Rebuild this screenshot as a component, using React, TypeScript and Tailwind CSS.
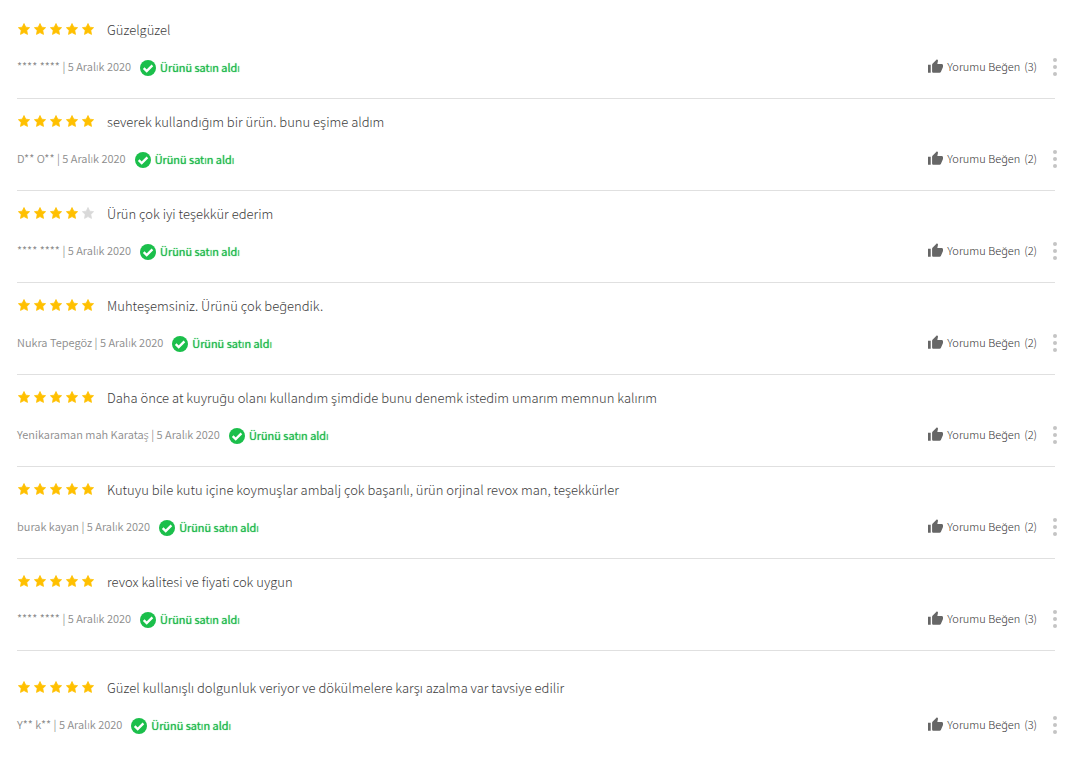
import clsx from "clsx";

type Review = {
  rating: number;
  comment: string;
  author: string;
  likes: number;
};

const reviews: Review[] = [
  { rating: 5, comment: "Güzelgüzel", author: "**** ****", likes: 3 },
  { rating: 5, comment: "severek kullandığım bir ürün. bunu eşime aldım", author: "D** O**", likes: 2 },
  { rating: 4, comment: "Ürün çok iyi teşekkür ederim", author: "**** ****", likes: 2 },
  { rating: 5, comment: "Muhteşemsiniz. Ürünü çok beğendik.", author: "Nukra Tepegöz", likes: 2 },
  {
    rating: 5,
    comment: "Daha önce at kuyruğu olanı kullandım şimdide bunu denemk istedim umarım memnun kalırım",
    author: "Yenikaraman mah Karataş",
    likes: 2,
  },
  {
    rating: 5,
    comment: "Kutuyu bile kutu içine koymuşlar ambalj çok başarılı, ürün orjinal revox man, teşekkürler",
    author: "burak kayan",
    likes: 2,
  },
  { rating: 5, comment: "revox kalitesi ve fiyati cok uygun", author: "**** ****", likes: 3 },
  {
    rating: 5,
    comment: "Güzel kullanışlı dolgunluk veriyor ve dökülmelere karşı azalma var tavsiye edilir",
    author: "Y** k**",
    likes: 3,
  },
];

const Stars = ({ rating }: { rating: number }) => (
  <div className="flex gap-1 pb-0.5" role="img" aria-label={`${rating} / 5`}>
    {[1, 2, 3, 4, 5].map((n) => (
      <svg
        key={n}
        viewBox="0 0 24 24"
        strokeWidth="1.5"
        strokeLinejoin="round"
        className={clsx(
          "size-3",
          n <= rating ? "fill-[#ffc000] stroke-[#ffc000]" : "fill-[#d9d9d9] stroke-[#d9d9d9]"
        )}
      >
        <path d="M12 1l3.500 7.300 7.700 1-5.600 5.500 1.400 8L12 19.200l-7 3.600 1.400-8L.8 9.300l7.700-1z" />
      </svg>
    ))}
  </div>
);

const CheckBadge = () => (
  <svg viewBox="0 0 16 16" className="size-4" aria-hidden="true">
    <circle cx="8" cy="8" r="8" fill="#1bbf4b" />
    <path d="M3.700 8.200l3 2.900L12.400 5.400" fill="none" stroke="#fff" strokeWidth="2.400" />
  </svg>
);

const ThumbUp = () => (
  <svg viewBox="1 1 22 20" className="h-3.5 w-[15px] fill-[#666]" aria-hidden="true">
    <path d="M1 21h4V9H1v12zm22-11c0-1.100-.9-2-2-2h-6.310l.95-4.570.03-.32c0-.41-.17-.79-.44-1.060L14.170 1 7.590 7.590C7.220 7.950 7 8.450 7 9v10c0 1.100.9 2 2 2h9c.83 0 1.540-.5 1.840-1.220l3.020-7.050c.09-.23.14-.47.14-.73v-2z" />
  </svg>
);

const ReviewItem = ({ review }: { review: Review }) => (
  <li className="border-b border-[#e0e0e0] pt-[13px] pb-[19px] last:border-b-0 last:pt-[27px]">
    <div className="flex items-center gap-[13px] pl-px">
      <Stars rating={review.rating} />
      <p className="text-[13px] leading-5 font-light text-[#3c3c3c]">{review.comment}</p>
    </div>

    <div className="mt-[15px] flex h-6 items-center justify-between">
      <div className="flex items-center gap-[9px] text-[11px] leading-4">
        <span className="pb-0.5 font-[350] text-[#8c8c8c]">{review.author} | 5 Aralık 2020</span>
        <span className="flex items-center gap-1 pt-0.5 font-[350] text-[#1bb84a]">
          <CheckBadge />
          <span className="pb-0.5 [text-shadow:0_0_1px_currentColor]">Ürünü satın aldı</span>
        </span>
      </div>

      <div className="-mr-0.5 flex items-center gap-4">
        <button type="button" className="flex items-center gap-1 pb-0.5 text-[11px] leading-4 font-light text-[#333]">
          <ThumbUp />
          <span>Yorumu Beğen</span>
          <span>({review.likes})</span>
        </button>
        <button type="button" aria-label="Diğer seçenekler" className="flex flex-col gap-[3px]">
          <span className="size-1 rounded-full bg-[#c4c4c4]" />
          <span className="size-1 rounded-full bg-[#c4c4c4]" />
          <span className="size-1 rounded-full bg-[#c4c4c4]" />
        </button>
      </div>
    </div>
  </li>
);

export default function App() {
  return (
    <main className="min-h-screen bg-white pt-[7px] pr-[23px] pl-[17px] font-['Noto_Sans_CJK_JP','Noto_Sans',sans-serif]">
      <ul>
        {reviews.map((review, index) => (
          <ReviewItem key={index} review={review} />
        ))}
      </ul>
    </main>
  );
}
